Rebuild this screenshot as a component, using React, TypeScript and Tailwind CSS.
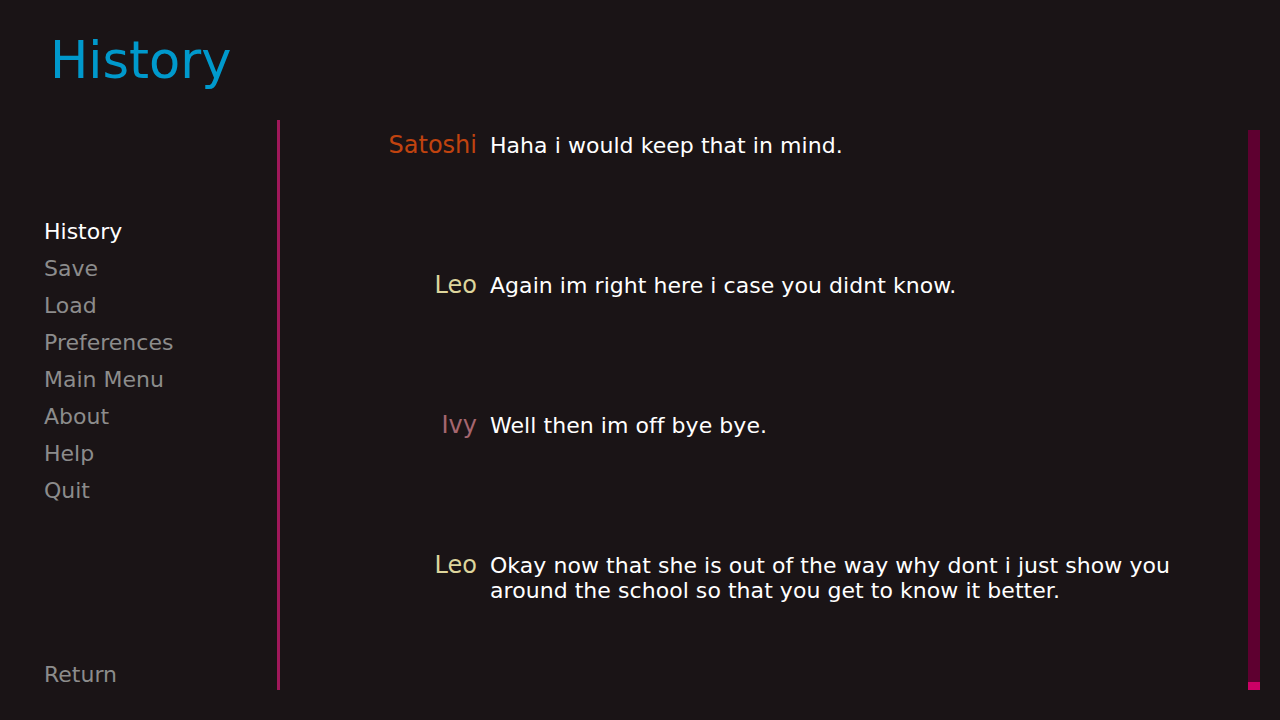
import React from 'react';

interface Entry {
  who: string;
  color: string;
  what: string;
}

const entries: Entry[] = [
  { who: 'Satoshi', color: 'text-[#c0430f]', what: 'Haha i would keep that in mind.' },
  { who: 'Leo', color: 'text-[#ddd59c]', what: 'Again im right here i case you didnt know.' },
  { who: 'Ivy', color: 'text-[#a5666f]', what: 'Well then im off bye bye.' },
  {
    who: 'Leo',
    color: 'text-[#ddd59c]',
    what: 'Okay now that she is out of the way why dont i just show you around the school so that you get to know it better.',
  },
];

const navItems = ['History', 'Save', 'Load', 'Preferences', 'Main Menu', 'About', 'Help', 'Quit'];

export default function App() {
  return (
    <div
      className="relative flex h-[720px] w-[1280px] overflow-hidden bg-[#1a1416]"
      style={{ fontFamily: '"DejaVu Sans", Verdana, sans-serif' }}
    >
      {/* Title */}
      <h1 className="absolute left-[50px] top-[35px] text-[51px] leading-none text-[#0099cc]">History</h1>

      {/* Navigation */}
      <nav className="flex h-full w-[277px] shrink-0 flex-col pl-[44px] pt-[213px] pb-[27px]">
        {navItems.map((item, i) => (
          <div
            key={item}
            className={`text-[22px] leading-[37px] ${i === 0 ? 'text-white' : 'text-[#8c8c8c]'}`}
          >
            {item}
          </div>
        ))}
        <div className="mt-auto text-[22px] leading-[37px] text-[#8c8c8c]">Return</div>
      </nav>

      {/* Divider */}
      <div className="mt-[120px] mb-[30px] w-[3px] shrink-0 bg-[#a0185a]" />

      {/* History entries */}
      <div className="flex flex-1 flex-col pt-[133px]">
        {entries.map((e, i) => (
          <div key={i} className="flex h-[140px] shrink-0 items-baseline">
            <div className={`w-[197px] shrink-0 text-right text-[24px] leading-none ${e.color}`}>{e.who}</div>
            <div className="ml-[13px] w-[740px] text-[22px] leading-[25px] tracking-[0.05px] text-white">{e.what}</div>
          </div>
        ))}
      </div>

      {/* Scrollbar */}
      <div className="mt-[130px] mb-[30px] mr-[20px] flex w-[12px] shrink-0 flex-col justify-end bg-[#5e0030]">
        <div className="h-[8px] bg-[#cc0066]" />
      </div>
    </div>
  );
}
